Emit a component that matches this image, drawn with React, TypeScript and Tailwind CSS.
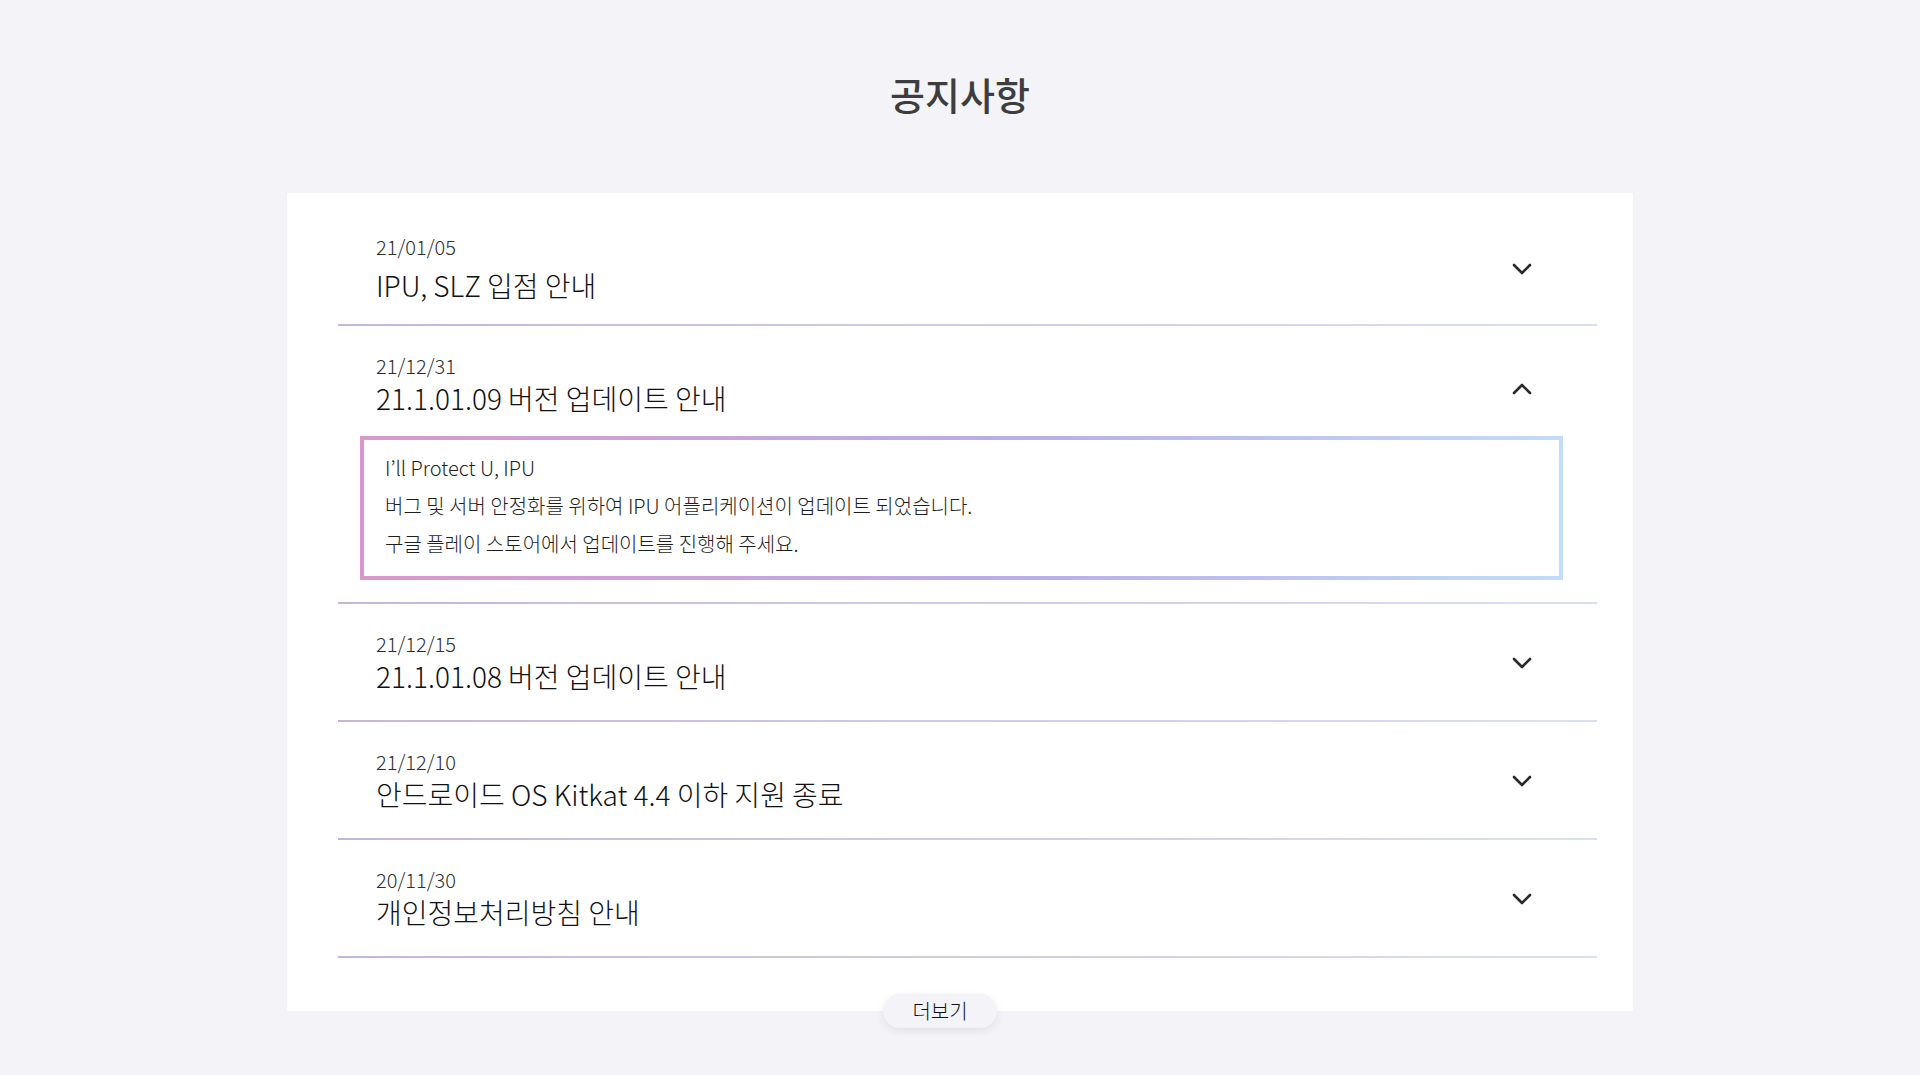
import React, { useState } from "react";

type Notice = {
  date: string;
  title: string;
  body?: string[];
};

const notices: Notice[] = [
  { date: "21/01/05", title: "IPU, SLZ 입점 안내" },
  {
    date: "21/12/31",
    title: "21.1.01.09 버전 업데이트 안내",
    body: [
      "I’ll Protect U, IPU",
      "버그 및 서버 안정화를 위하여 IPU 어플리케이션이 업데이트 되었습니다.",
      "구글 플레이 스토어에서 업데이트를 진행해 주세요.",
    ],
  },
  { date: "21/12/15", title: "21.1.01.08 버전 업데이트 안내" },
  { date: "21/12/10", title: "안드로이드 OS Kitkat 4.4 이하 지원 종료" },
  { date: "20/11/30", title: "개인정보처리방침 안내" },
];

const Chevron = ({ up }: { up: boolean }) => (
  <svg
    width="20"
    height="12"
    viewBox="0 0 20 12"
    className={up ? "rotate-180 translate-y-[4px]" : ""}
  >
    <polyline
      points="2,2 10,10 18,2"
      fill="none"
      stroke="#2a2a2a"
      strokeWidth="2.6"
      strokeLinecap="round"
      strokeLinejoin="round"
    />
  </svg>
);

const NoticeRow = ({
  notice,
  open,
  first,
  onToggle,
}: {
  notice: Notice;
  open: boolean;
  first: boolean;
  onToggle: () => void;
}) => (
  <div>
    <button
      onClick={onToggle}
      className={
        "w-full flex items-center justify-between pl-[38px] pr-[65px] pt-[27px] text-left " +
        (first ? "pb-[20px]" : "pb-[25px]")
      }
    >
      <div className="flex flex-col">
        <span className="text-[20px] leading-[26px] font-light text-[#2e2e2e]">{notice.date}</span>
        <span
          className={
            "text-[28px] leading-[38px] font-light text-[#111111] " + (first ? "mt-[6px]" : "")
          }
        >
          {notice.title}
        </span>
      </div>
      <Chevron up={open} />
    </button>

    {/* Expanded body */}
    {open && notice.body && (
      <div className="-mt-[6px] mb-[22px] ml-[22px] mr-[34px] p-[4px] bg-linear-to-r from-[#da98ca] via-[#b9adea] via-55% to-[#c3dcf7]">
        <div className="bg-white pl-[21px] pr-4 pt-[9px] pb-[13px]">
          {notice.body.map((line) => (
            <p key={line} className="text-[20px] leading-[38px] font-light text-[#1e1e1e]">
              {line}
            </p>
          ))}
        </div>
      </div>
    )}

    <div className="h-[2px] bg-linear-to-r from-[#c6b5da] to-[#dbe0f1]" />
  </div>
);

export default function App() {
  const [openIndex, setOpenIndex] = useState<number | null>(1);

  return (
    <div
      className="min-h-screen w-full bg-[#f4f4f8] flex flex-col items-center pt-[70px]"
      style={{ fontFamily: '"Noto Sans CJK KR", "Noto Sans", sans-serif' }}
    >
      <h1 className="text-[38px] leading-[48px] font-medium text-[#3d3d3d] mb-[75px]">공지사항</h1>

      <div className="w-[1346px] bg-white pl-[51px] pr-[36px] pt-[14px] pb-[53px]">
        {notices.map((n, i) => (
          <NoticeRow
            key={n.date}
            notice={n}
            open={openIndex === i}
            first={i === 0}
            onToggle={() => setOpenIndex(openIndex === i ? null : i)}
          />
        ))}
      </div>

      <div className="w-[1346px] flex justify-center pr-[40px] -mt-[17px]">
        <button className="w-[114px] h-[34px] rounded-full bg-[#f4f4f8] shadow-[0_3px_8px_rgba(0,0,0,0.08)] text-[20px] leading-[34px] font-light text-[#111111]">
          더보기
        </button>
      </div>
    </div>
  );
}
